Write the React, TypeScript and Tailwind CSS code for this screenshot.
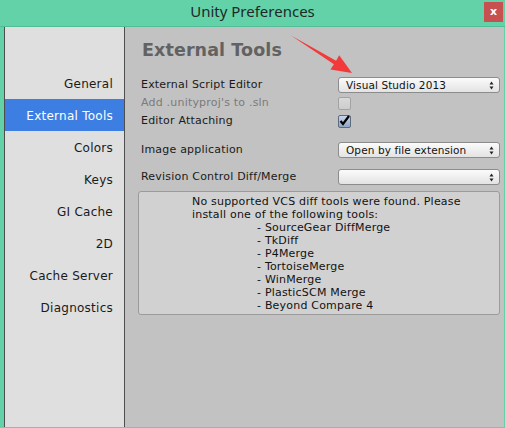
const menu = ['General', 'External Tools', 'Colors', 'Keys', 'GI Cache', '2D', 'Cache Server', 'Diagnostics'];

const tools = [
	'SourceGear DiffMerge',
	'TkDiff',
	'P4Merge',
	'TortoiseMerge',
	'WinMerge',
	'PlasticSCM Merge',
	'Beyond Compare 4',
];

const UpDown = () => (
	<svg width="5" height="9" viewBox="0 0 5 9" className="shrink-0">
		<path d="M2.5 0.5 L4.5 3.5 L0.5 3.5 Z" fill="#222" />
		<path d="M0.5 5.5 L4.5 5.5 L2.5 8.5 Z" fill="#222" />
	</svg>
);

const Dropdown = ({ value }: { value?: string }) => (
	<div className="w-[162px] h-[16px] flex items-center justify-between pl-[7px] pr-[5px] rounded-[3px] border border-[#8c8c8c] bg-gradient-to-b from-[#fbfbfb] to-[#e3e3e3] text-[10.5px] text-[#111] tracking-[0.1px] leading-none">
		<span>{value ?? ''}</span>
		<UpDown />
	</div>
);

const Checkbox = ({ checked }: { checked?: boolean }) =>
	checked ? (
		<div className="w-[13px] h-[13px] rounded-[2px] border border-[#5d6b80] bg-gradient-to-b from-[#c9d6ea] to-[#8ea4c4] relative">
			<svg width="13" height="13" viewBox="0 0 13 13" className="absolute -left-[1px] -top-[2px]">
				<path d="M2.5 7 L5 10 L11 2" stroke="#000" strokeWidth="2.2" fill="none" />
			</svg>
		</div>
	) : (
		<div className="w-[13px] h-[13px] rounded-[2px] border border-[#a3a3a3] bg-gradient-to-b from-[#d9d9d9] to-[#cdcdcd]" />
	);

export default function App() {
	return (
		<div
			className="relative w-[505px] h-[428px] bg-[#64d2a9] flex flex-col"
			style={{ fontFamily: '"DejaVu Sans", Verdana, sans-serif' }}
		>
			{/* title bar */}
			<div className="relative h-[27px] shrink-0 border-b border-[#52be98] flex items-center justify-center">
				<span className="text-[15px] text-[#1d2a26] -mt-[3px]" style={{ fontFamily: '"Noto Sans", "Open Sans", sans-serif' }}>
					Unity Preferences
				</span>
				<div className="absolute right-[2px] top-[2px] w-[19px] h-[20px] bg-[#c75050] flex items-center justify-center text-white text-[11px] font-bold leading-none pb-[2px]">
					x
				</div>
			</div>

			<div className="flex-1 flex pl-[4px] pr-[1px] pb-[1px] min-h-0">
				{/* sidebar */}
				<div className="w-[121px] shrink-0 bg-[#dfdfdf] border-l border-r border-[#4d4d4d] pt-[40px] flex flex-col">
					{menu.map((m) => (
						<div
							key={m}
							className={`h-[32px] flex items-center justify-end pr-[11px] pt-[1px] text-[12px] tracking-[0.25px] ${
								m === 'External Tools' ? 'bg-[#3d7ee2] text-white' : 'text-[#1a1a1a]'
							}`}
						>
							{m}
						</div>
					))}
				</div>

				{/* content */}
				<div className="flex-1 bg-[#c2c2c2] pl-[13px] pr-[4px] pt-[12px] flex flex-col text-[11px] tracking-[0.2px] text-[#1a1a1a]">
					<div className="pl-[4px] h-[22px] leading-[22px] text-[17.5px] font-bold text-[#626262] tracking-[0.1px]">
						External Tools
					</div>

					<div className="mt-[15px] pl-[3px] h-[18px] flex items-center">
						<span className="w-[197px]">External Script Editor</span>
						<Dropdown value="Visual Studio 2013" />
					</div>
					<div className="pl-[3px] h-[18px] flex items-center">
						<span className="w-[197px] text-[#7b7b7b]">Add .unityproj's to .sln</span>
						<Checkbox />
					</div>
					<div className="pl-[3px] h-[18px] flex items-center">
						<span className="w-[197px]">Editor Attaching</span>
						<Checkbox checked />
					</div>

					<div className="mt-[11px] pl-[3px] h-[18px] flex items-center">
						<span className="w-[197px]">Image application</span>
						<Dropdown value="Open by file extension" />
					</div>
					<div className="mt-[9px] pl-[3px] h-[18px] flex items-center">
						<span className="w-[197px]">Revision Control Diff/Merge</span>
						<Dropdown />
					</div>

					<div className="mt-[5px] w-[362px] h-[124px] rounded-[3px] border border-[#9b9b9b] bg-[#d1d1d1] pt-[3px] pl-[53px] leading-[13px] text-[#111]">
						<div>No supported VCS diff tools were found. Please</div>
						<div>install one of the following tools:</div>
						{tools.map((t) => (
							<div key={t} className="pl-[65px]">
								- {t}
							</div>
						))}
					</div>
				</div>
			</div>

			{/* annotation arrow */}
			<svg width="505" height="428" className="absolute left-0 top-0 pointer-events-none">
				<polygon
					points="291,35.5 336.1,60.8 339.2,55.2 352,73 330.4,69.6 333.9,64.2"
					fill="#f23a3a"
				/>
			</svg>
		</div>
	);
}
